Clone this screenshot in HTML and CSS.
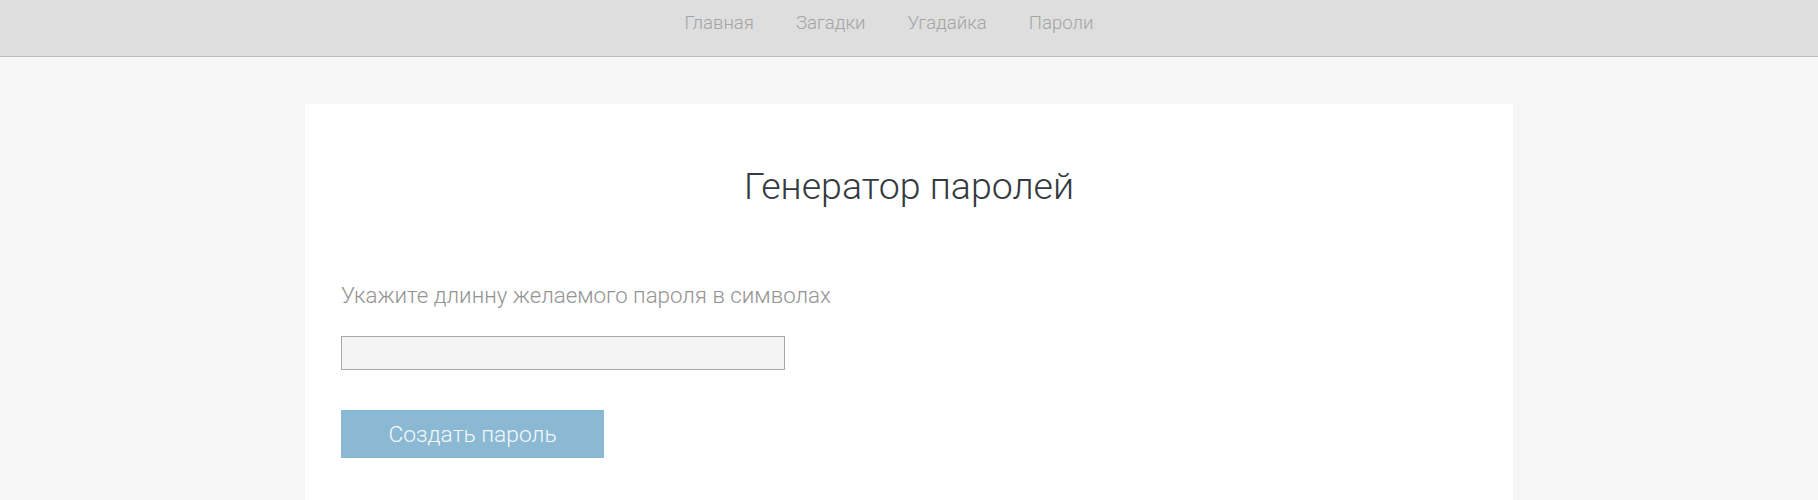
FILE: index.html
```html
<!DOCTYPE html>
<html lang="ru">
<head>
<meta charset="utf-8">
<title>Генератор паролей</title>
<link rel="stylesheet" href="styles.css">
</head>
<body>
<header class="topbar">
  <ul class="menu">
    <li><a href="#">Главная</a></li>
    <li><a href="#">Загадки</a></li>
    <li><a href="#">Угадайка</a></li>
    <li><a href="#">Пароли</a></li>
  </ul>
</header>
<main class="card">
  <h1 class="title">Генератор паролей</h1>
  <p class="label">Укажите длинну желаемого пароля в символах</p>
  <input class="field" type="text">
  <button class="btn" type="button">Создать пароль</button>
</main>
</body>
</html>
```
FILE: styles.css
```css
* { box-sizing: border-box; }
html, body { margin: 0; padding: 0; }
body {
  background: #f6f6f6;
  font-family: Roboto, "Liberation Sans", sans-serif;
  font-weight: 300;
}
.topbar {
  height: 57px;
  background: #dedede;
  border-bottom: 1px solid #bcbcbc;
  display: flex;
  justify-content: center;
}
.menu {
  list-style: none;
  margin: 0;
  padding: 0 40px 0 0;
  display: flex;
  gap: 42px;
}
.menu a {
  display: block;
  line-height: 46px;
  font-size: 18.6px;
  color: #a4a4a4;
  text-decoration: none;
}
.card {
  width: 1208px;
  margin: 47px auto 0;
  background: #fff;
  padding: 60px 36px 60px;
  display: flex;
  flex-direction: column;
  align-items: flex-start;
}
.title {
  align-self: stretch;
  margin: 0;
  text-align: center;
  font-size: 37.5px;
  line-height: 44px;
  font-weight: 300;
  color: #333a40;
}
.label {
  margin: 74px 0 0;
  font-size: 22.3px;
  line-height: 26px;
  color: #939393;
}
.field {
  margin-top: 28px;
  width: 444px;
  height: 34px;
  background: #f4f4f4;
  border: 1px solid #a8a8a8;
  outline: none;
}
.btn {
  margin-top: 40px;
  width: 263px;
  height: 48px;
  border: none;
  background: #8bb9d3;
  color: #f4f8fb;
  font-family: Roboto, "Liberation Sans", sans-serif;
  font-weight: 300;
  font-size: 22.8px;
}
```
